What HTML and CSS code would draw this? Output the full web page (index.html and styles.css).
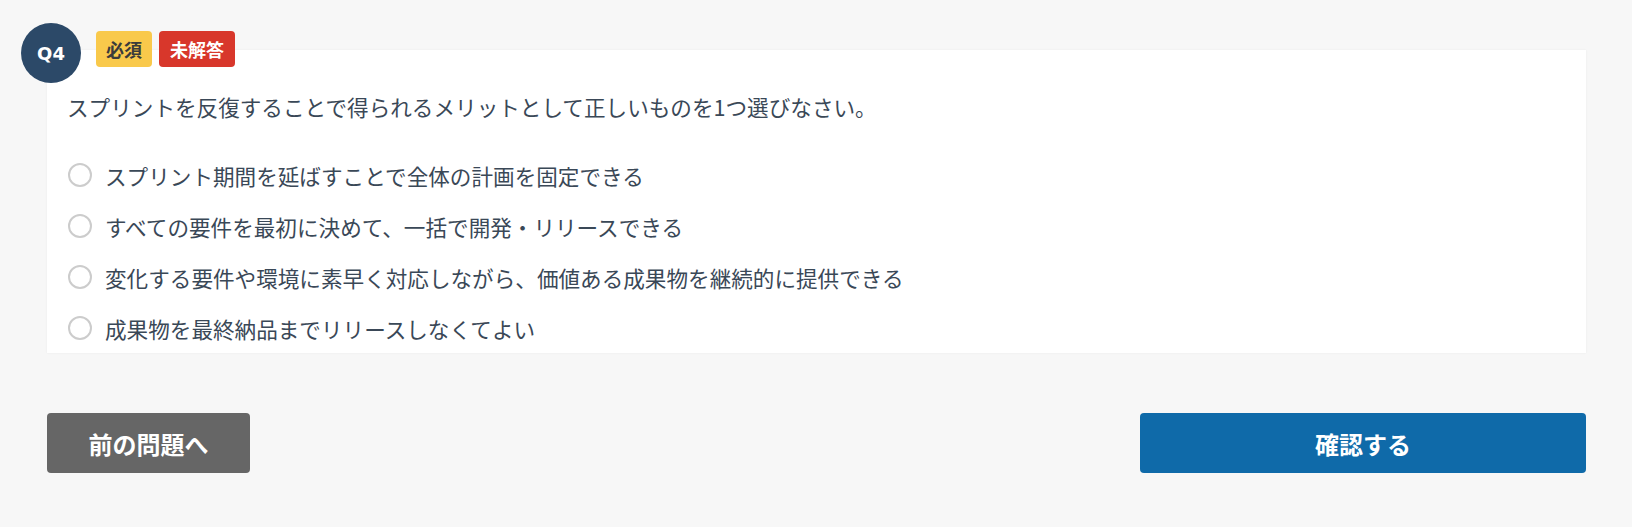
FILE: index.html
```html
<!DOCTYPE html>
<html lang="ja">
<head>
<meta charset="utf-8">
<title>Q4</title>
<link rel="stylesheet" href="styles.css">
</head>
<body>
<main class="page">
  <section class="question">
    <div class="q-header">
      <div class="q-num">Q4</div>
      <div class="badges">
        <span class="badge badge-required">必須</span>
        <span class="badge badge-unanswered">未解答</span>
      </div>
    </div>
    <div class="card">
      <p class="q-text">スプリントを反復することで得られるメリットとして正しいものを1つ選びなさい。</p>
      <ul class="options">
        <li class="option"><span class="radio"></span><span class="opt-text">スプリント期間を延ばすことで全体の計画を固定できる</span></li>
        <li class="option"><span class="radio"></span><span class="opt-text">すべての要件を最初に決めて、一括で開発・リリースできる</span></li>
        <li class="option"><span class="radio"></span><span class="opt-text">変化する要件や環境に素早く対応しながら、価値ある成果物を継続的に提供できる</span></li>
        <li class="option"><span class="radio"></span><span class="opt-text">成果物を最終納品までリリースしなくてよい</span></li>
      </ul>
    </div>
  </section>
  <div class="actions">
    <button class="btn btn-prev">前の問題へ</button>
    <button class="btn btn-confirm">確認する</button>
  </div>
</main>
</body>
</html>
```
FILE: styles.css
```css
html, body {
  margin: 0;
  padding: 0;
  background: #f7f7f7;
}
body {
  font-family: "Noto Sans CJK JP", "Noto Sans", sans-serif;
  color: #3a4857;
}
.page {
  padding: 50px 46px 0 47px;
}
.question {
  position: relative;
}
.q-header {
  position: absolute;
  top: -27px;
  left: -26px;
  display: flex;
  align-items: flex-start;
  gap: 15px;
}
.q-num {
  width: 60px;
  height: 60px;
  border-radius: 50%;
  background: #2c4968;
  color: #fff;
  font-family: "DejaVu Sans", "Noto Sans", sans-serif;
  font-weight: 700;
  font-size: 18px;
  display: flex;
  align-items: center;
  justify-content: center;
}
.badges {
  display: flex;
  gap: 7px;
  margin-top: 8px;
}
.badge {
  height: 36px;
  padding: 0 10px;
  border-radius: 4px;
  font-size: 18px;
  font-weight: 700;
  line-height: 36px;
}
.badge-required {
  background: #f9c94b;
  color: #3b3b3b;
}
.badge-unanswered {
  background: #d8372b;
  color: #fff;
  padding: 0 11px;
}
.card {
  background: #fff;
  box-shadow: 0 0 2px rgba(0, 0, 0, 0.06);
  padding: 41px 20px 5px 20px;
  height: 303px;
  box-sizing: border-box;
}
.q-text {
  margin: 0;
  font-size: 21.6px;
  line-height: 32px;
}
.options {
  list-style: none;
  margin: 36px 0 0 0;
  padding: 0;
  display: flex;
  flex-direction: column;
  gap: 19px;
}
.option {
  display: flex;
  align-items: center;
  height: 32px;
  gap: 13px;
  padding-left: 1px;
  font-size: 21.6px;
}
.radio {
  width: 24px;
  height: 24px;
  border: 2px solid #cccccc;
  border-radius: 50%;
  box-sizing: border-box;
  flex: none;
}
.actions {
  display: flex;
  justify-content: space-between;
  margin-top: 60px;
}
.btn {
  height: 60px;
  border: none;
  border-radius: 4px;
  color: #fff;
  font-family: "Noto Sans CJK JP", "Noto Sans", sans-serif;
  font-size: 24px;
  font-weight: 700;
  cursor: pointer;
}
.btn-prev {
  width: 203px;
  background: #666666;
}
.btn-confirm {
  width: 446px;
  background: #0f6aa9;
}
```
